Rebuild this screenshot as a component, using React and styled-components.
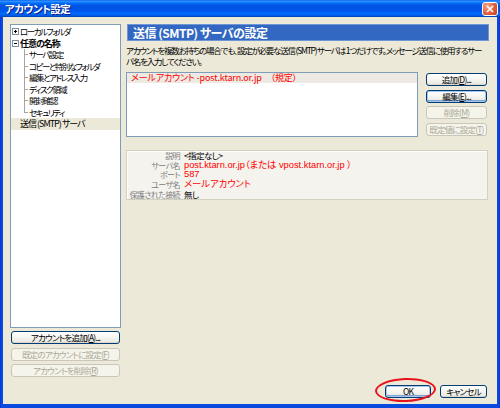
import React from 'react';
import styled, { createGlobalStyle } from 'styled-components';

const JP = `"Noto Sans CJK JP", "Noto Sans CJK SC", sans-serif`;
const LAT = `"Liberation Sans", "Noto Sans CJK JP", sans-serif`;

const Global = createGlobalStyle`
  html, body { margin: 0; padding: 0; }
  body {
    width: 500px; height: 408px; overflow: hidden;
    background: #ECE9D8;
    font-family: ${JP};
    font-feature-settings: "palt";
  }
  #root { width: 500px; height: 408px; }
`;

const Window = styled.div`
  width: 500px; height: 408px; box-sizing: border-box;
  display: flex; flex-direction: column;
  background: linear-gradient(to right, #0831D9, #0A4BDF 1.5px, #0A4BDF 498px, #0831D9);
`;

const TitleBar = styled.div`
  height: 17px; flex: none;
  display: flex; align-items: center; justify-content: space-between;
  padding: 0 2px 0 5px;
  background: linear-gradient(to bottom, #0058EE 0%, #3593FF 6%, #288EFF 10%, #127DFF 14%, #036FFC 18%, #0262EE 24%, #0057E5 32%, #0054E3 40%, #0055EB 60%, #005BF5 70%, #026AFE 80%, #0062EF 88%, #0052D6 94%, #0040AB 100%);
`;

const TitleText = styled.span`
  color: #fff; font-weight: bold; font-size: 10.5px; letter-spacing: -0.5px;
  text-shadow: 1px 1px 0 #0A1E80;
`;

const CloseBtn = styled.div`
  width: 16px; height: 14px; box-sizing: border-box;
  border: 1px solid #fff; border-radius: 3px;
  background: radial-gradient(circle at 30% 25%, #F2A58B, #E0623D 55%, #C23A1B);
  display: flex; align-items: center; justify-content: center;
`;

const Body = styled.div`
  flex: 1; min-height: 0;
  margin: 0 3px 4px;
  padding: 7px 8px 6px 7px;
  background: #ECE9D8;
  display: flex; flex-direction: column;
`;

const Main = styled.div`
  flex: 1; min-height: 0;
  display: flex; gap: 5px;
`;

const LeftCol = styled.div`
  width: 111px; flex: none;
  display: flex; flex-direction: column;
`;

const Tree = styled.div`
  flex: 1;
  background: #fff;
  border: 1px solid #7F9DB9;
  padding: 1px 0 0;
`;

const TreeRow = styled.div`
  height: 11.5px;
  display: flex; align-items: stretch;
  padding-left: ${p => p.$indent}px;
  background: ${p => (p.$selected ? '#ECE9D8' : 'transparent')};
  font-size: ${p => (p.$tight ? '8.5px' : '9px')};
  letter-spacing: ${p => (p.$tight ? '-1.5px' : '-1px')};
  font-weight: ${p => (p.$bold ? 'bold' : 'normal')};
  color: #000;
  white-space: nowrap;
`;

const TreeLabel = styled.span`
  display: flex; align-items: center;
  line-height: 11.5px;
`;

const Expander = styled.span`
  width: 7px; display: flex; align-items: center; margin-right: 1px;
`;

const Connector = styled.span`
  width: 5px; flex: none;
  background:
    linear-gradient(#A5A5A5, #A5A5A5) left top / 1px ${p => (p.$last ? '50%' : '100%')} no-repeat,
    linear-gradient(#A5A5A5, #A5A5A5) left center / 4px 1px no-repeat;
`;

const LeftButtons = styled.div`
  display: flex; flex-direction: column; gap: 3.5px;
  margin-top: 3px; padding: 0 1px;
`;

const Btn = styled.button`
  height: 13px; box-sizing: border-box; padding: 0;
  width: ${p => (p.$w ? `${p.$w}px` : '100%')};
  border-radius: 3px;
  font-family: ${JP}; font-feature-settings: "palt";
  font-size: 8.5px; letter-spacing: -0.8px; line-height: 11px;
  display: flex; align-items: center; justify-content: center;
  white-space: nowrap;
  border: 1px solid ${p => (p.disabled ? '#C9C7BA' : '#003C74')};
  color: ${p => (p.disabled ? '#ACA899' : '#000')};
  background: ${p => (p.disabled
    ? '#F5F4EA'
    : 'linear-gradient(to bottom, #FFFFFF 0%, #F6F6F2 45%, #ECEBE5 85%, #D6D0C5 100%)')};
  box-shadow: ${p => (p.$focus ? 'inset 0 0 0 1px #A8C6F0, inset 0 -1px 0 1px #7DA2CE' : 'none')};
  u { text-decoration: underline; }
`;

const RightCol = styled.div`
  flex: 1; min-width: 0;
  display: flex; flex-direction: column;
`;

const Header = styled.div`
  height: 17px; box-sizing: border-box;
  margin-left: 1px;
  background: #3268C2;
  border: 1px solid #6E95D6;
  color: #fff; font-weight: bold; font-size: 12px; letter-spacing: -0.5px;
  display: flex; align-items: center; padding-left: 5px;
  white-space: pre;
`;

const Desc = styled.div`
  margin-top: 4px;
  font-size: 8.5px; line-height: 10.5px; letter-spacing: -1.22px;
  color: #000;
  overflow: hidden;
`;

const DescLine = styled.span`
  display: block; white-space: nowrap;
`;

const ListRow = styled.div`
  margin-top: 6px; margin-right: 2px;
  display: flex; gap: 8px;
`;

const ListBox = styled.div`
  flex: 1; height: 65px; box-sizing: border-box;
  border: 1px solid #7F9DB9;
  background: #fff;
`;

const ListItem = styled.div`
  height: 10px;
  background: #ECEAE2;
  color: #F00;
  font-size: 9px; letter-spacing: -0.15px; line-height: 10px;
  padding-left: 4px;
  white-space: pre;
`;

const ButtonCol = styled.div`
  width: 61px; flex: none;
  display: flex; flex-direction: column; gap: 3.5px;
  padding-top: 1px;
`;

const Details = styled.div`
  margin-top: 13px; margin-right: 1px;
  height: 50px; box-sizing: border-box;
  border: 1px solid #D3D0C0;
  background: #F4F3EE;
  box-shadow: inset 1px 1px 0 #fff;
  display: grid;
  grid-template-columns: 53px 1fr;
  grid-auto-rows: 9.7px;
  column-gap: 4px;
  align-content: start;
`;

const DLabel = styled.span`
  text-align: right;
  font-size: 8px; letter-spacing: -0.6px; line-height: 9.7px;
  color: #808080;
  white-space: nowrap;
`;

const DValue = styled.span`
  font-family: ${p => (p.$red ? LAT : JP)};
  font-size: ${p => (p.$red ? '9.3px' : '8.5px')};
  letter-spacing: ${p => (p.$red ? '0' : '-0.6px')};
  line-height: 9.7px;
  color: ${p => (p.$red ? '#F00' : '#000')};
  white-space: nowrap;
`;

const Footer = styled.div`
  margin-top: 8px; padding-right: 2px;
  display: flex; justify-content: flex-end; gap: 9px;
`;

const OkWrap = styled.div`
  position: relative;
`;

const Ring = styled.div`
  position: absolute;
  left: -10px; top: -7px; width: 61px; height: 24px;
  box-sizing: border-box;
  border: 2px solid #E8121C;
  border-radius: 50%;
  transform: rotate(-2deg);
  pointer-events: none;
`;

const PlusMinus = ({ open }) => (
  <svg width="7" height="7" viewBox="0 0 7 7">
    <rect x="0.5" y="0.5" width="6" height="6" fill="#fff" stroke="#7F8EA0" />
    <path d="M2 3.5h3" stroke="#000" />
    {!open && <path d="M3.5 2v3" stroke="#000" />}
  </svg>
);

const children = ['サーバ設定', 'コピーと特別なフォルダ', '編集とアドレス入力', 'ディスク領域', '開封確認', 'セキュリティ'];

const details = [
  { label: '説明', value: '<指定なし>' },
  { label: 'サーバ名', value: 'post.ktarn.or.jp（または vpost.ktarn.or.jp ）', red: true },
  { label: 'ポート', value: '587', red: true },
  { label: 'ユーザ名', value: 'メールアカウント', red: true },
  { label: '保護された接続', value: '無し' },
];

export default function App() {
  return (
    <>
      <Global />
      <Window>
        <TitleBar>
          <TitleText>アカウント設定</TitleText>
          <CloseBtn>
            <svg width="8" height="8" viewBox="0 0 8 8">
              <path d="M1 1L7 7M7 1L1 7" stroke="#fff" strokeWidth="1.6" />
            </svg>
          </CloseBtn>
        </TitleBar>
        <Body>
          <Main>
            <LeftCol>
              <Tree>
                <TreeRow $indent={1} $tight>
                  <Expander><PlusMinus /></Expander>
                  <TreeLabel>ローカルフォルダ</TreeLabel>
                </TreeRow>
                <TreeRow $indent={1} $bold>
                  <Expander><PlusMinus open /></Expander>
                  <TreeLabel>任意の名称</TreeLabel>
                </TreeRow>
                {children.map((c, i) => (
                  <TreeRow key={c} $indent={13} $tight>
                    <Connector $last={i === children.length - 1} />
                    <TreeLabel>{c}</TreeLabel>
                  </TreeRow>
                ))}
                <TreeRow $indent={9} $selected>
                  <TreeLabel>送信 (SMTP) サーバ</TreeLabel>
                </TreeRow>
              </Tree>
              <LeftButtons>
                <Btn>アカウントを追加(<u>A</u>)...</Btn>
                <Btn disabled>既定のアカウントに設定(<u>F</u>)</Btn>
                <Btn disabled>アカウントを削除(<u>R</u>)</Btn>
              </LeftButtons>
            </LeftCol>
            <RightCol>
              <Header>送信 (SMTP) サーバの設定</Header>
              <Desc>
                <DescLine>アカウントを複数お持ちの場合でも、設定が必要な送信 (SMTP) サーバは 1つだけです。メッセージ送信に使用するサー</DescLine>
                <DescLine>バ名を入力してください。</DescLine>
              </Desc>
              <ListRow>
                <ListBox>
                  <ListItem>メールアカウント -post.ktarn.or.jp　（規定）</ListItem>
                </ListBox>
                <ButtonCol>
                  <Btn>追加(<u>D</u>)...</Btn>
                  <Btn $focus>編集(<u>E</u>)...</Btn>
                  <Btn disabled>削除(<u>M</u>)</Btn>
                  <Btn disabled>既定値に設定(<u>T</u>)</Btn>
                </ButtonCol>
              </ListRow>
              <Details>
                {details.map(d => (
                  <React.Fragment key={d.label}>
                    <DLabel>{d.label}</DLabel>
                    <DValue $red={d.red}>{d.value}</DValue>
                  </React.Fragment>
                ))}
              </Details>
            </RightCol>
          </Main>
          <Footer>
            <OkWrap>
              <Btn $w={46} $focus>OK</Btn>
              <Ring />
            </OkWrap>
            <Btn $w={47}>キャンセル</Btn>
          </Footer>
        </Body>
      </Window>
    </>
  );
}
